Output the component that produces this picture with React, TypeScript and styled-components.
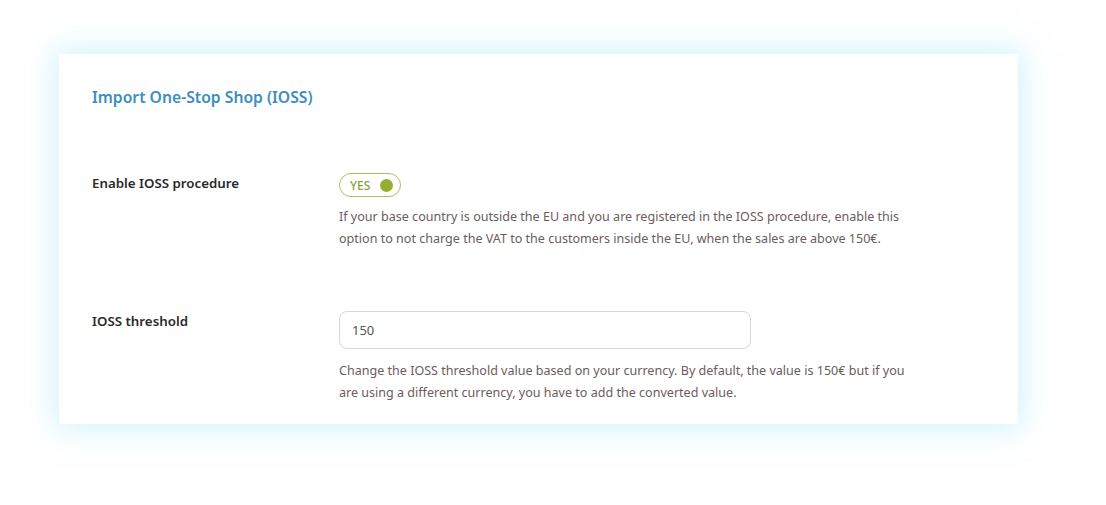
import React from 'react';
import styled, { createGlobalStyle } from 'styled-components';

const GlobalStyle = createGlobalStyle`
  html, body {
    margin: 0;
    padding: 0;
    background: #ffffff;
    font-family: 'Noto Sans', 'Open Sans', sans-serif;
  }
`;

const Page = styled.div`
  width: 1106px;
  height: 505px;
  box-sizing: border-box;
  padding: 54px 0 0 59px;
`;

const Card = styled.div`
  width: 959px;
  box-sizing: border-box;
  padding: 33px 33px 20px 33px;
  background: #ffffff;
  box-shadow: 0 0 28px 4px rgba(170, 232, 250, 0.55);
`;

const Title = styled.h2`
  margin: 0;
  font-size: 15.7px;
  font-weight: 600;
  line-height: 20px;
  color: #3e8ebd;
`;

const Row = styled.div<{ top: number }>`
  display: grid;
  grid-template-columns: 247px 1fr;
  margin-top: ${({ top }) => top}px;
`;

const Label = styled.div<{ offset: number }>`
  padding-top: ${({ offset }) => offset}px;
  font-size: 13.3px;
  font-weight: 600;
  line-height: 18px;
  color: #2a2a2a;
`;

const Field = styled.div`
  display: flex;
  flex-direction: column;
  align-items: flex-start;
`;

const Toggle = styled.div`
  display: flex;
  align-items: center;
  justify-content: space-between;
  box-sizing: border-box;
  width: 62px;
  height: 24px;
  padding: 0 7px 0 10px;
  border: 1.5px solid #a9c25e;
  border-radius: 12px;
  font-size: 12px;
  font-weight: 500;
  color: #8aa23a;
`;

const Knob = styled.span`
  width: 13px;
  height: 13px;
  border-radius: 50%;
  background: #94ae34;
`;

const Input = styled.input`
  width: 412px;
  height: 38px;
  box-sizing: border-box;
  padding: 0 12px;
  border: 1px solid #d8d8d8;
  border-radius: 8px;
  font-family: inherit;
  font-size: 13px;
  color: #555555;
  outline: none;
`;

const Desc = styled.p<{ gap: number }>`
  margin: ${({ gap }) => gap}px 0 0 0;
  max-width: 580px;
  font-size: 12.55px;
  line-height: 22px;
  color: #6b5d5d;
`;

const App = () => {
  return (
    <Page>
      <GlobalStyle />
      <Card>
        <Title>Import One-Stop Shop (IOSS)</Title>
        <Row top={66}>
          <Label offset={1}>Enable IOSS procedure</Label>
          <Field>
            <Toggle>
              YES
              <Knob />
            </Toggle>
            <Desc gap={9}>
              If your base country is outside the EU and you are registered in the IOSS procedure, enable this
              option to not charge the VAT to the customers inside the EU, when the sales are above 150€.
            </Desc>
          </Field>
        </Row>
        <Row top={61}>
          <Label offset={1}>IOSS threshold</Label>
          <Field>
            <Input defaultValue="150" />
            <Desc gap={11}>
              Change the IOSS threshold value based on your currency. By default, the value is 150€ but if you
              are using a different currency, you have to add the converted value.
            </Desc>
          </Field>
        </Row>
      </Card>
    </Page>
  );
};

export default App;
